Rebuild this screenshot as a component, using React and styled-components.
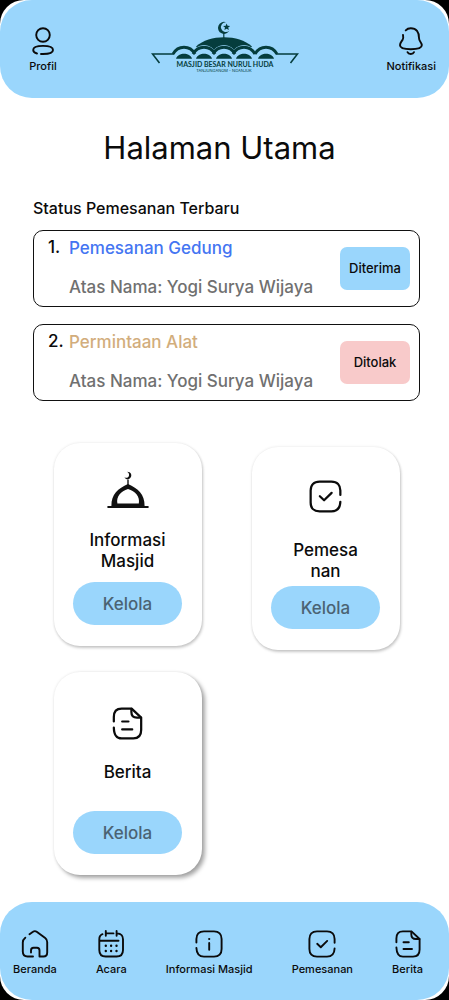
import React from "react";
import styled, { createGlobalStyle } from "styled-components";

const sky = "#9ad6fc";

const GlobalStyle = createGlobalStyle`
  * { box-sizing: border-box; }
  html { background: #000; }
  body {
    margin: 0;
    font-family: "Inter", "Liberation Sans", sans-serif;
    font-weight: 500;
    color: #0b0b0b;
  }
`;

const Screen = styled.div`
  display: flex;
  flex-direction: column;
  min-height: 100vh;
  background: #fff;
  border-radius: 24px;
  overflow: hidden;
`;

const Header = styled.header`
  display: grid;
  grid-template-columns: 1fr auto 1fr;
  align-items: start;
  height: 98px;
  padding: 0 13px;
  border-radius: 32px;
  background: ${sky};
`;

const IconLink = styled.a`
  display: flex;
  flex-direction: column;
  align-items: center;
  gap: 4px;
  color: inherit;
  text-decoration: none;
  font-size: 11px;
  line-height: 14px;
  white-space: nowrap;
`;

const ProfileSlot = styled.div`
  justify-self: start;
  padding: 27px 0 0 16px;
`;

const LogoSlot = styled.div`
  padding-top: 20px;
`;

const NoticeSlot = styled.div`
  justify-self: end;
  padding-top: 27px;
`;

const Main = styled.main`
  flex: 1;
  padding: 32px 29px 24px 33px;
`;

const Title = styled.h1`
  margin: 0;
  padding-right: 14px;
  font-size: 31px;
  line-height: 36px;
  font-weight: 400;
  text-align: center;
`;

const SectionTitle = styled.h2`
  margin: 32px 0 12px;
  font-size: 16px;
  line-height: 20px;
  font-weight: 500;
`;

const OrderList = styled.ul`
  display: flex;
  flex-direction: column;
  gap: 17px;
  margin: 0;
  padding: 0;
  list-style: none;
`;

const Order = styled.li`
  display: flex;
  align-items: center;
  gap: 6px;
  height: 77px;
  padding: 0 9px 0 14px;
  border: 1px solid #111;
  border-radius: 10px;
  font-size: 17px;
  line-height: 21px;
`;

const OrderNumber = styled.span`
  align-self: flex-start;
  width: 15px;
  padding-top: 6px;
  white-space: nowrap;
`;

const OrderBody = styled.div`
  align-self: flex-start;
  flex: 1;
  display: flex;
  flex-direction: column;
  gap: 18px;
  padding-top: 7px;
  white-space: nowrap;
`;

const OrderName = styled.span`
  color: ${(p) => p.$color};
`;

const OrderOwner = styled.span`
  color: #707070;
`;

const Status = styled.button`
  width: 70px;
  height: 43px;
  padding: 0;
  border: 0;
  border-radius: 7px;
  background: ${(p) => p.$color};
  color: inherit;
  font: inherit;
  font-size: 13px;
`;

const Menu = styled.section`
  display: grid;
  grid-template-columns: 148px 148px;
  grid-template-rows: 207px 203px;
  justify-content: center;
  gap: 22px 50px;
  margin-top: 42px;
`;

const Card = styled.article`
  display: flex;
  flex-direction: column;
  align-items: center;
  align-self: ${(p) => p.$align};
  height: 203px;
  padding: ${(p) => p.$top}px 19px 21px;
  border-radius: 26px;
  background: #fff;
  box-shadow: ${(p) =>
    p.$raised
      ? "3px 3px 4px rgba(0, 0, 0, 0.35), 0 0 3px rgba(0, 0, 0, 0.1)"
      : "1px 2px 3px rgba(0, 0, 0, 0.2), 0 0 3px rgba(0, 0, 0, 0.1)"};
`;

const CardTitle = styled.h3`
  width: ${(p) => p.$width}px;
  margin: ${(p) => p.$gap}px 0 0;
  font-size: 17px;
  line-height: 21px;
  font-weight: 500;
  text-align: center;
  overflow-wrap: anywhere;
`;

const ManageButton = styled.button`
  width: 109px;
  height: 43px;
  margin-top: auto;
  flex-shrink: 0;
  border: 0;
  border-radius: 22px;
  background: ${sky};
  color: #4b6373;
  font: inherit;
  font-size: 17px;
`;

const BottomNav = styled.nav`
  display: flex;
  justify-content: space-between;
  align-items: flex-start;
  height: 98px;
  padding: 28px 26px 0 13px;
  border-radius: 32px;
  background: ${sky};
`;

const Svg = styled.svg`
  display: block;
  fill: none;
  stroke: currentColor;
  stroke-width: 1.9;
  stroke-linecap: round;
  stroke-linejoin: round;
`;

function Icon({ size = 28, children }) {
  return (
    <Svg width={size} height={size} viewBox="0 0 28 28" aria-hidden="true">
      {children}
    </Svg>
  );
}

const ProfileIcon = () => (
  <Icon>
    <circle cx="14" cy="8" r="6.8" />
    <path d="M12 27H14C20.5 27 24 25.8 24 23S20.5 18.9 14 18.9S4.2 20 4.2 23C4.2 24.8 5.6 25.9 8 26.5" />
  </Icon>
);

const BellIcon = () => (
  <Icon>
    <path d="M6 8C6.4 10 6.3 11.5 5.6 12.7C4.6 14.5 3 15.6 3 18.3C3 21.3 8 22.2 13.8 22.2S24.8 21.3 24.8 18.3C24.8 15.4 22 14.5 22 11C22 5 19.5 1.3 13.8 1.3C11.5 1.3 10 2 8.7 3.4" />
    <path d="M10.5 25.2C11.5 27.6 16 27.6 17 25.2" />
  </Icon>
);

const HomeIcon = () => (
  <Icon>
    <path d="M8.5 4.3L12 1.8C13.2 .9 14.5 .9 15.7 1.8L24.2 8C25.6 9.1 26.2 10.3 26.2 12V22.5C26.2 25.5 25.2 26.5 22.5 26.5H18.5V20.5C18.5 18.5 17.7 17.8 16 17.8H12.5C10.8 17.8 10 18.5 10 20.5V22.5" />
    <path d="M4.3 7.7C2.3 9.3 1.8 10.3 1.8 12.5V21.5C1.8 25.1 3.4 26.5 6.5 26.5H12" />
  </Icon>
);

const CalendarIcon = () => (
  <Icon>
    <path d="M5.5 4.2C3.2 5 2.3 6.6 2.3 9.3V20C2.3 24.5 4.2 26.5 8.7 26.5H19.5C24 26.5 26 24.5 26 20V9.3C26 5.4 24.2 3.6 20 3.4M2.3 10.7H21.5M8.8 1V5.8M19.6 1V5.8M9 3.4H16.5" />
    <path
      strokeWidth="2.4"
      d="M8.8 15.8h.01M14.1 15.8h.01M19.5 15.8h.01M8.8 21h.01M14.1 21h.01M19.5 21h.01"
    />
  </Icon>
);

const InfoIcon = () => (
  <Icon>
    <path d="M1.4 12.5V9C1.4 4 4 1.4 9 1.4H19C24 1.4 26.6 4 26.6 9V19C26.6 24 24 26.6 19 26.6H9C4.2 26.6 1.6 24.2 1.4 18M14.2 13V19.8" />
    <path strokeWidth="2.2" d="M14.2 9h.01" />
  </Icon>
);

const CheckIcon = ({ size }) => (
  <Icon size={size}>
    <path d="M26.6 12.7V9C26.6 4 24 1.4 19 1.4H9C4 1.4 1.4 4 1.4 9V19C1.4 24 4 26.6 9 26.6H19C23.8 26.6 26.4 24.2 26.6 18.5" />
    <path d="M9.2 13.8L12.8 17.2L19.2 10.9" />
  </Icon>
);

const DocumentIcon = ({ size }) => (
  <Icon size={size}>
    <path d="M2.4 12.3V8.5C2.4 3.7 4.6 1.4 9 1.4H17.5L25.6 9V19.5C25.6 24.4 23.4 26.6 19 26.6H9C4.8 26.6 2.6 24.4 2.4 17.5" />
    <path d="M17.3 1.6V4.2C17.3 7.6 18.8 9 22 9H25.4M9.5 12.3H14.8M9.5 19H18" />
  </Icon>
);

const DomeIcon = () => (
  <svg width="42" height="38" viewBox="0 0 42 38" aria-hidden="true">
    <path
      fill="#111"
      fillRule="evenodd"
      d="M4.4 35C4.2 23 11 17.5 21 13C31 17.5 37.8 23 37.6 35ZM10.4 32.6H31.8C33.2 25.5 28.4 20.4 21 18C13.8 20.4 9 25.5 10.4 32.6Z"
    />
    <path stroke="#111" strokeWidth="2" strokeLinecap="round" d="M1.2 36H40.8" />
    <path fill="none" stroke="#111" strokeWidth="1.4" d="M21 14.5V8.6" />
    <path
      fill="#111"
      d="M20 .7C24.2.8 25.2 4 23.6 6.6C22.2 9 18.6 8.7 17.5 6.2C19.3 7.2 21.3 6.8 21.9 5C22.5 3.2 21.8 1.7 20 .7Z"
    />
  </svg>
);

const pine = "#053d3d";
const arches = [33, 53, 73, 93, 115];

const Logo = () => (
  <svg
    width="148"
    height="56"
    viewBox="0 0 148 56"
    role="img"
    aria-label="Masjid Besar Nurul Huda"
  >
    <g fill={pine}>
      <path d="M75 2.2A6 6 0 1 0 78.4 10.5A4.9 4.9 0 1 1 75 2.2Z" />
      <path d="M75.6 3.4L76.6 5.8L79.2 6L77.2 7.6L77.9 10.1L75.6 8.8L73.4 10.1L74 7.6L72.1 6L74.7 5.8Z" />
      <path d="M72.2 13H73.4V18H72.2Z" />
      <path d="M45 26.6C52 20 62 17.2 73 17.2S94 20 101 26.6L93 34H53Z" />
    </g>
    {arches.map((x) => (
      <path
        key={x}
        d={`M${x - 12} 36C${x - 8} 22.5 ${x + 8} 22.5 ${x + 12} 36Z`}
        fill={sky}
        stroke={sky}
        strokeWidth="2"
      />
    ))}
    {arches.map((x) => (
      <g key={x}>
        <path
          d={`M${x - 11} 34C${x - 6} 25 ${x + 6} 25 ${x + 11} 34`}
          fill="none"
          stroke={pine}
          strokeWidth="2.8"
        />
        <path
          d={`M${x - 8} 38.8C${x - 6} 32.2 ${x + 6} 32.2 ${x + 8} 38.8Z`}
          fill={pine}
        />
      </g>
    ))}
    <path
      d="M23 34H1.5L8.5 43M125 34H146.5L139.5 43"
      fill="none"
      stroke={pine}
      strokeWidth="1.6"
    />
    <g fill={pine} textAnchor="middle">
      <text x="74" y="47" fontSize="7" fontWeight="700" fontFamily="Lato, sans-serif">
        MASJID BESAR NURUL HUDA
      </text>
      <text x="73" y="52" fontSize="4" fontWeight="400">
        TANJUNGANOM - NGANJUK
      </text>
    </g>
  </svg>
);

const orders = [
  { name: "Pemesanan Gedung", color: "#4475f2", status: "Diterima", tint: sky },
  { name: "Permintaan Alat", color: "#d2ad7c", status: "Ditolak", tint: "#f8caca" },
];

const navItems = [
  { label: "Beranda", icon: <HomeIcon /> },
  { label: "Acara", icon: <CalendarIcon /> },
  { label: "Informasi Masjid", icon: <InfoIcon /> },
  { label: "Pemesanan", icon: <CheckIcon /> },
  { label: "Berita", icon: <DocumentIcon /> },
];

export default function App() {
  return (
    <>
      <GlobalStyle />
      <Screen>
        <Header>
          <ProfileSlot>
            <IconLink href="#profil">
              <ProfileIcon />
              Profil
            </IconLink>
          </ProfileSlot>
          <LogoSlot>
            <Logo />
          </LogoSlot>
          <NoticeSlot>
            <IconLink href="#notifikasi">
              <BellIcon />
              Notifikasi
            </IconLink>
          </NoticeSlot>
        </Header>

        <Main>
          <Title>Halaman Utama</Title>
          <SectionTitle>Status Pemesanan Terbaru</SectionTitle>
          <OrderList>
            {orders.map((order, i) => (
              <Order key={order.name}>
                <OrderNumber>{i + 1}.</OrderNumber>
                <OrderBody>
                  <OrderName $color={order.color}>{order.name}</OrderName>
                  <OrderOwner>Atas Nama: Yogi Surya Wijaya</OrderOwner>
                </OrderBody>
                <Status $color={order.tint}>{order.status}</Status>
              </Order>
            ))}
          </OrderList>

          <Menu>
            <Card $align="start" $top={28}>
              <DomeIcon />
              <CardTitle $width={90} $gap={21}>Informasi Masjid</CardTitle>
              <ManageButton>Kelola</ManageButton>
            </Card>
            <Card $align="end" $top={33}>
              <CheckIcon size={33} />
              <CardTitle $width={72} $gap={27}>Pemesanan</CardTitle>
              <ManageButton>Kelola</ManageButton>
            </Card>
            <Card $align="start" $top={35} $raised>
              <DocumentIcon size={33} />
              <CardTitle $width={90} $gap={22}>Berita</CardTitle>
              <ManageButton>Kelola</ManageButton>
            </Card>
          </Menu>
        </Main>

        <BottomNav>
          {navItems.map((item) => (
            <IconLink key={item.label} href={"#" + item.label.toLowerCase().replace(" ", "-")}>
              {item.icon}
              {item.label}
            </IconLink>
          ))}
        </BottomNav>
      </Screen>
    </>
  );
}
